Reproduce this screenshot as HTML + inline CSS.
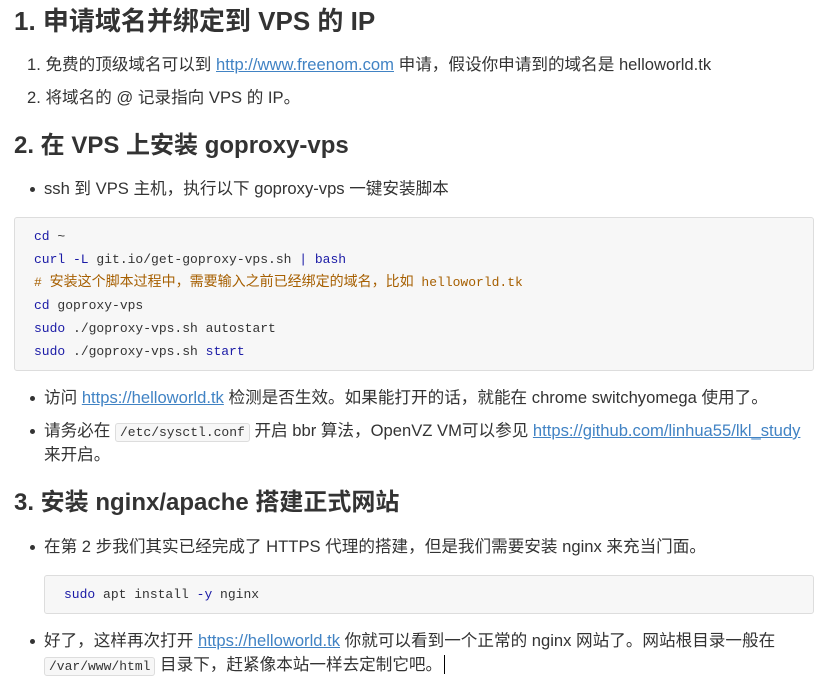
<!DOCTYPE html>
<html><head><meta charset="utf-8"><style>
body{margin:0;width:826px;height:683px;background:#fff;font-family:"Liberation Sans","Noto Sans CJK SC",sans-serif;color:#333;position:relative;overflow:hidden}
.l{position:absolute;white-space:nowrap;font-size:16.6px;line-height:20px}
.h{position:absolute;white-space:nowrap;font-size:26px;font-weight:bold;line-height:30px;color:#333}
.h2{font-size:24px}
a{color:#4183c4;text-decoration:underline}
.b{position:absolute;width:5px;height:5px;border-radius:50%;background:#333}
.pre{position:absolute;background:#f7f7f7;border:1px solid #ddd;border-radius:3px}
.c{position:absolute;white-space:nowrap;font-family:"Liberation Mono","Noto Sans CJK SC",monospace;font-size:13px;line-height:20px;color:#333}
.k{color:#1a1aa6}.cm{color:#a65f00}
code{font-family:"Liberation Mono",monospace;font-size:13px;background:#f7f7f7;border:1px solid #ddd;border-radius:3px;padding:1px 4px}
</style></head><body>
<div class="h" style="left:14px;top:6px">1. 申请域名并绑定到 VPS 的 IP</div>
<div class="l" style="left:27px;top:55px">1. 免费的顶级域名可以到 <a>http://www.freenom.com</a> 申请，假设你申请到的域名是 helloworld.tk</div>
<div class="l" style="left:27px;top:88px">2. 将域名的 @ 记录指向 VPS 的 IP。</div>
<div class="h h2" style="left:14px;top:131px">2. 在 VPS 上安装 goproxy-vps</div>
<div class="b" style="left:30px;top:187px"></div>
<div class="l" style="left:44px;top:179px">ssh 到 VPS 主机，执行以下 goproxy-vps 一键安装脚本</div>
<div class="pre" style="left:14px;top:217px;width:798px;height:152px"></div>
<div class="c" style="left:34px;top:227px"><span class="k">cd</span> ~</div>
<div class="c" style="left:34px;top:250px"><span class="k">curl -L</span> git.io/get-goproxy-vps.sh <span class="k">| bash</span></div>
<div class="c cm" style="left:34px;top:273px"># <span style="font-size:14px">安装这个脚本过程中，需要输入之前已经绑定的域名，比如</span> helloworld.tk</div>
<div class="c" style="left:34px;top:296px"><span class="k">cd</span> goproxy-vps</div>
<div class="c" style="left:34px;top:319px"><span class="k">sudo</span> ./goproxy-vps.sh autostart</div>
<div class="c" style="left:34px;top:342px"><span class="k">sudo</span> ./goproxy-vps.sh <span class="k">start</span></div>
<div class="b" style="left:30px;top:396px"></div>
<div class="l" style="left:44px;top:388px">访问 <a>https://helloworld.tk</a> 检测是否生效。如果能打开的话，就能在 chrome switchyomega 使用了。</div>
<div class="b" style="left:30px;top:429px"></div>
<div class="l" style="left:44px;top:421px">请务必在 <code>/etc/sysctl.conf</code> 开启 bbr 算法，OpenVZ VM可以参见 <a>https://github.com/linhua55/lkl_study</a></div>
<div class="l" style="left:44px;top:445px">来开启。</div>
<div class="h h2" style="left:14px;top:488px">3. 安装 nginx/apache 搭建正式网站</div>
<div class="b" style="left:30px;top:545px"></div>
<div class="l" style="left:44px;top:537px">在第 2 步我们其实已经完成了 HTTPS 代理的搭建，但是我们需要安装 nginx 来充当门面。</div>
<div class="pre" style="left:44px;top:575px;width:768px;height:37px"></div>
<div class="c" style="left:64px;top:585px"><span class="k">sudo</span> apt install <span class="k">-y</span> nginx</div>
<div class="b" style="left:30px;top:639px"></div>
<div class="l" style="left:44px;top:631px">好了，这样再次打开 <a>https://helloworld.tk</a> 你就可以看到一个正常的 nginx 网站了。网站根目录一般在</div>
<div class="l" style="left:44px;top:655px"><code>/var/www/html</code> 目录下，赶紧像本站一样去定制它吧。<span style="border-left:1px solid #000;margin-left:2px"></span></div>
</body></html>
